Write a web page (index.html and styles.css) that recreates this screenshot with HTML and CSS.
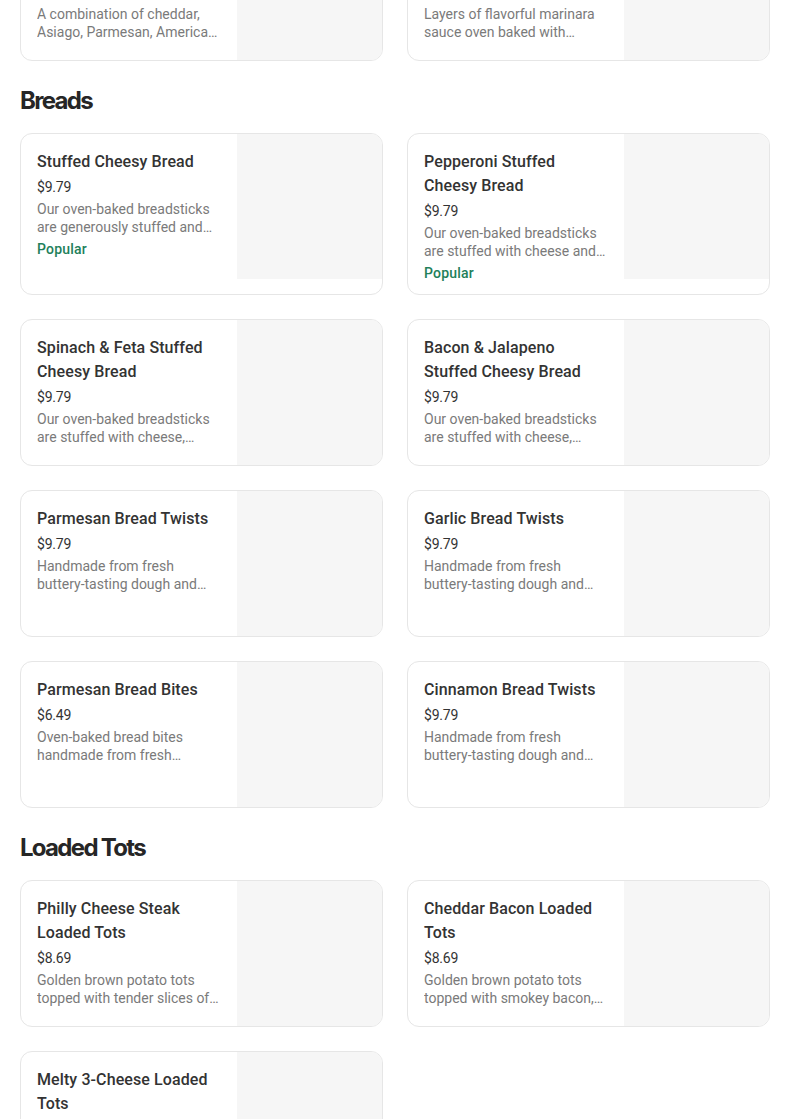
FILE: index.html
```html
<!DOCTYPE html>
<html lang="en">
<head>
<meta charset="utf-8">
<title>Menu</title>
<link rel="stylesheet" href="styles.css">
</head>
<body>
<main class="menu">
  <section class="section section-first">
    <div class="grid">
      <div class="card">
        <div class="info">
          <div class="title">Three Cheese Stuffed Cheesy Bread</div>
          <div class="price">$9.79</div>
          <div class="desc">A combination of cheddar, Asiago, Parmesan, American and mozzarella cheeses</div>
        </div>
        <div class="thumb"></div>
      </div>
      <div class="card">
        <div class="info">
          <div class="title">Marinara Dipping Sauce Cup Bake</div>
          <div class="price">$9.79</div>
          <div class="desc">Layers of flavorful marinara sauce oven baked with cheese and toppings</div>
        </div>
        <div class="thumb"></div>
      </div>
    </div>
  </section>

  <section class="section">
    <h2 class="heading">Breads</h2>
    <div class="grid">
      <div class="card">
        <div class="info">
          <div class="title">Stuffed Cheesy Bread</div>
          <div class="price">$9.79</div>
          <div class="desc">Our oven-baked breadsticks are generously stuffed and covered with cheese</div>
          <div class="tag">Popular</div>
        </div>
        <div class="thumb"></div>
      </div>
      <div class="card">
        <div class="info">
          <div class="title">Pepperoni Stuffed Cheesy Bread</div>
          <div class="price">$9.79</div>
          <div class="desc">Our oven-baked breadsticks are stuffed with cheese and pepperoni</div>
          <div class="tag">Popular</div>
        </div>
        <div class="thumb"></div>
      </div>
      <div class="card">
        <div class="info">
          <div class="title">Spinach &amp; Feta Stuffed Cheesy Bread</div>
          <div class="price">$9.79</div>
          <div class="desc">Our oven-baked breadsticks are stuffed with cheese, spinach and feta</div>
        </div>
        <div class="thumb"></div>
      </div>
      <div class="card">
        <div class="info">
          <div class="title">Bacon &amp; Jalapeno Stuffed Cheesy Bread</div>
          <div class="price">$9.79</div>
          <div class="desc">Our oven-baked breadsticks are stuffed with cheese, bacon and jalapeno</div>
        </div>
        <div class="thumb"></div>
      </div>
      <div class="card">
        <div class="info">
          <div class="title">Parmesan Bread Twists</div>
          <div class="price">$9.79</div>
          <div class="desc">Handmade from fresh buttery-tasting dough and baked to a golden brown</div>
        </div>
        <div class="thumb"></div>
      </div>
      <div class="card">
        <div class="info">
          <div class="title">Garlic Bread Twists</div>
          <div class="price">$9.79</div>
          <div class="desc">Handmade from fresh buttery-tasting dough and baked to a golden brown</div>
        </div>
        <div class="thumb"></div>
      </div>
      <div class="card">
        <div class="info">
          <div class="title">Parmesan Bread Bites</div>
          <div class="price">$6.49</div>
          <div class="desc">Oven-baked bread bites handmade from fresh buttery-tasting dough</div>
        </div>
        <div class="thumb"></div>
      </div>
      <div class="card">
        <div class="info">
          <div class="title">Cinnamon Bread Twists</div>
          <div class="price">$9.79</div>
          <div class="desc">Handmade from fresh buttery-tasting dough and baked to a golden brown</div>
        </div>
        <div class="thumb"></div>
      </div>
    </div>
  </section>

  <section class="section">
    <h2 class="heading">Loaded Tots</h2>
    <div class="grid">
      <div class="card">
        <div class="info">
          <div class="title">Philly Cheese Steak Loaded Tots</div>
          <div class="price">$8.69</div>
          <div class="desc">Golden brown potato tots topped with tender slices of steak and cheese</div>
        </div>
        <div class="thumb"></div>
      </div>
      <div class="card">
        <div class="info">
          <div class="title">Cheddar Bacon Loaded Tots</div>
          <div class="price">$8.69</div>
          <div class="desc">Golden brown potato tots topped with smokey bacon, cheddar and ranch</div>
        </div>
        <div class="thumb"></div>
      </div>
      <div class="card">
        <div class="info">
          <div class="title">Melty 3-Cheese Loaded Tots</div>
          <div class="price">$8.69</div>
          <div class="desc">Golden brown potato tots topped with a blend of three cheeses</div>
        </div>
        <div class="thumb"></div>
      </div>
    </div>
  </section>
</main>
</body>
</html>
```

FILE: styles.css
```css
html, body {
  margin: 0;
  padding: 0;
  background: #ffffff;
}

body {
  font-family: Roboto, "Liberation Sans", sans-serif;
  color: #222222;
  overflow: hidden;
}

.menu {
  width: 750px;
  padding: 0 20px;
}

.section-first {
  margin-top: -86px;
}

.heading {
  margin: 24px 0 16px;
  font-family: Inter, Roboto, sans-serif;
  font-size: 24px;
  line-height: 32px;
  font-weight: 700;
  letter-spacing: -1.7px;
  color: #262626;
}

.grid {
  display: grid;
  grid-template-columns: 1fr 1fr;
  gap: 24px;
}

.card {
  display: flex;
  border: 1px solid #e6e6e6;
  border-radius: 12px;
  overflow: hidden;
  background: #ffffff;
}

.info {
  flex: 1;
  min-width: 0;
  padding: 16px 16px 12px;
}

.thumb {
  flex: none;
  width: 145px;
  height: 145px;
  background: #f6f6f6;
}

.title {
  font-size: 16px;
  line-height: 24px;
  font-weight: 500;
  letter-spacing: 0.1px;
  color: #333333;
}

.price {
  margin-top: 3px;
  font-size: 14px;
  line-height: 20px;
  letter-spacing: -0.2px;
  color: #333333;
}

.desc {
  margin-top: 3px;
  font-size: 14px;
  line-height: 18px;
  color: #7a7a7a;
  display: -webkit-box;
  -webkit-line-clamp: 2;
  -webkit-box-orient: vertical;
  overflow: hidden;
}

.tag {
  margin-top: 4px;
  font-size: 14px;
  line-height: 18px;
  font-weight: 500;
  letter-spacing: 0.2px;
  color: #22805a;
}
```
